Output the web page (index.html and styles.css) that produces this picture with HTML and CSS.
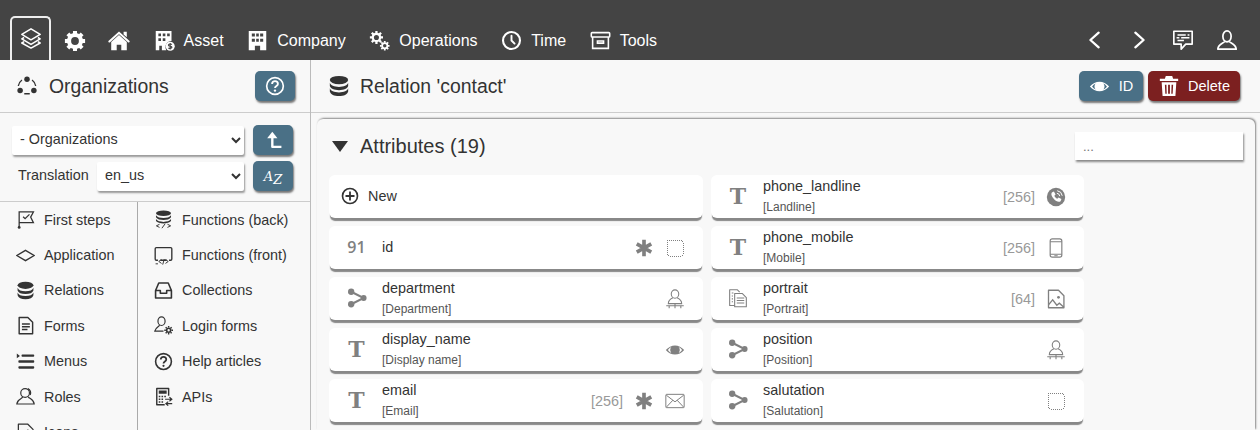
FILE: index.html
```html
<!DOCTYPE html>
<html lang="en">
<head>
    <meta charset="UTF-8">
    <meta name="viewport" content="width=device-width, initial-scale=1.0">
    <title>Relation contact</title>
    <link rel="stylesheet" href="styles.css">
</head>
<body>
    <svg class="sprite" xmlns="http://www.w3.org/2000/svg">
        <symbol id="i-layers" viewBox="0 0 24 24"><g fill="none" stroke="currentColor" stroke-width="1.7" stroke-linejoin="round"><path d="M12 2 22 8l-10 6L2 8z"/><path d="M4.5 11.5 2 13l10 6 10-6-2.5-1.5"/><path d="M4.5 16 2 17.5 12 23l10-5.5-2.5-1.5"/></g></symbol>
        <symbol id="i-gear" viewBox="0 0 24 24"><circle cx="12" cy="12" r="6.5" fill="none" stroke="currentColor" stroke-width="4.5"/><g stroke="currentColor" stroke-width="4.4"><path d="M12 1v5M12 18v5M1 12h5M18 12h5M4.2 4.2l3.5 3.5M16.3 16.3l3.5 3.5M19.8 4.2l-3.5 3.5M7.7 16.3l-3.5 3.5"/></g></symbol>
        <symbol id="i-home" viewBox="0 0 24 24"><path fill="currentColor" d="M12 5.5 3.5 13v9h6v-6h5v6h6v-9z"/><path fill="none" stroke="currentColor" stroke-width="2.2" stroke-linecap="round" d="M1.5 12.5 12 3l10.5 9.5"/><path fill="currentColor" d="M17 2h3.5v6L17 5z"/></symbol>
        <symbol id="i-asset" viewBox="0 0 24 24"><path fill="currentColor" fill-rule="evenodd" d="M2 1h18v11.5a7 7 0 0 0-6 10.5H9v-5H6v5H2zM5 4v3h3V4zm5 0v3h3V4zm5 0v3h3V4zM5 9.5v3h3v-3zm5 0v3h3v-3z"/><circle cx="18.5" cy="18.5" r="5.2" fill="currentColor"/><path fill="none" stroke="#444" stroke-width="1.3" d="M20.5 16.5c-1-.8-4-.8-4 .9s4 .9 4 2.4-3 1.5-4 .7M18.5 14.8v7.4"/></symbol>
        <symbol id="i-company" viewBox="0 0 24 24"><path fill="currentColor" fill-rule="evenodd" d="M2 1h20v22h-7v-5H9v5H2zM5.5 4v3.5H9V4zm5 0v3.5h3V4zM15 4v3.5h3.5V4zM5.5 10v3.5H9V10zm5 0v3.5h3V10zM15 10v3.5h3.5V10z"/></symbol>
        <symbol id="i-gears" viewBox="0 0 24 24"><circle cx="8.5" cy="8.5" r="4.2" fill="none" stroke="currentColor" stroke-width="2.6"/><path stroke="currentColor" stroke-width="2.6" d="M8.5 1v3M8.5 13v3M1 8.5h3M13 8.5h3M3.2 3.2l2.1 2.1M11.7 11.7l2.1 2.1M13.8 3.2l-2.1 2.1M5.3 11.7l-2.1 2.1"/><circle cx="18" cy="18" r="3" fill="none" stroke="currentColor" stroke-width="2"/><path stroke="currentColor" stroke-width="2" d="M18 12.5v2M18 21.5v2M12.5 18h2M21.5 18h2M14.1 14.1l1.4 1.4M20.5 20.5l1.4 1.4M21.9 14.1l-1.4 1.4M15.5 20.5l-1.4 1.4"/></symbol>
        <symbol id="i-clock" viewBox="0 0 24 24"><circle cx="12" cy="12" r="9.7" fill="none" stroke="currentColor" stroke-width="2.4"/><path fill="none" stroke="currentColor" stroke-width="2.2" stroke-linecap="round" d="M12 6.5V12l3.5 3.5"/></symbol>
        <symbol id="i-box" viewBox="0 0 24 24"><g fill="none" stroke="currentColor" stroke-width="1.8"><rect x="1.5" y="3" width="21" height="5" rx="1"/><path d="M3 8v13h18V8M8.5 12.5h7V15h-7z"/></g></symbol>
        <symbol id="i-prev" viewBox="0 0 24 24"><path fill="none" stroke="currentColor" stroke-width="2.5" stroke-linecap="round" stroke-linejoin="round" d="M16 4 7 12l9 8"/></symbol>
        <symbol id="i-next" viewBox="0 0 24 24"><path fill="none" stroke="currentColor" stroke-width="2.5" stroke-linecap="round" stroke-linejoin="round" d="m8 4 9 8-9 8"/></symbol>
        <symbol id="i-chat" viewBox="0 0 24 24"><path fill="none" stroke="currentColor" stroke-width="1.8" stroke-linejoin="round" d="M2 2.5h20v14h-7L10 22v-5.5H2z"/><path stroke="currentColor" stroke-width="1.7" d="M6 6.5h9M17 6.5h2M5 9.5h3M10 9.5h9M6 12.5h7"/></symbol>
        <symbol id="i-user" viewBox="0 0 24 24"><g fill="none" stroke="currentColor" stroke-width="1.9" stroke-linejoin="round"><ellipse cx="12" cy="8" rx="4.5" ry="6"/><path d="M9.5 13.5c-.5 2-7 2.5-7.500 8.500h20c-.5-6-7-6.500-7.500-8.500"/></g></symbol>
        <symbol id="i-org" viewBox="0 0 24 24"><g fill="currentColor"><circle cx="12" cy="4.5" r="3"/><circle cx="4.5" cy="17" r="3"/><circle cx="19.5" cy="17" r="3"/></g><path fill="none" stroke="currentColor" stroke-width="1.5" d="M6.5 5.500A10 10 0 0 0 2.500 12M17.500 5.500a10 10 0 0 1 4 6.500M9 20.500h6"/></symbol>
        <symbol id="i-help" viewBox="0 0 24 24"><circle cx="12" cy="12" r="10" fill="none" stroke="currentColor" stroke-width="2"/><path fill="none" stroke="currentColor" stroke-width="2.2" d="M8.5 9.5c0-4.500 7-4.500 7 0 0 2.500-3.500 2.500-3.500 5"/><circle cx="12" cy="17.5" r="1.4" fill="currentColor"/></symbol>
        <symbol id="i-db" viewBox="0 0 24 24"><g fill="currentColor"><ellipse cx="12" cy="5.5" rx="10" ry="4.5"/><path d="M2 8.5c1 3 4.500 4.500 10 4.500s9-1.500 10-4.500V12c-1 3-4.500 4.500-10 4.500S3 15 2 12z"/><path d="M2 14.500c1 3 4.500 4.500 10 4.500s9-1.500 10-4.500V18c-1 3.500-4.500 5-10 5S3 21.500 2 18z"/></g></symbol>
        <symbol id="i-plus" viewBox="0 0 24 24"><circle cx="12" cy="12" r="10" fill="none" stroke="currentColor" stroke-width="2.2"/><path stroke="currentColor" stroke-width="2.4" d="M12 6v12M6 12h12"/></symbol>
        <symbol id="i-eye" viewBox="0 0 24 24"><path fill="currentColor" fill-rule="evenodd" d="M1 12c3-3.500 7-5.500 11-5.500S20 8.500 23 12c-3 3.500-7 5.500-11 5.500S4 15.500 1 12zm6.500-3.500C6 9.300 4.500 10.500 3.500 12c1 1.500 2.500 2.700 4 3.500a6 6 0 0 1 0-7zm9 0a6 6 0 0 1 0 7c1.500-.8 3-2 4-3.500-1-1.500-2.500-2.700-4-3.500z"/></symbol>
        <symbol id="i-trash" viewBox="0 0 24 24"><path fill="currentColor" fill-rule="evenodd" d="M8.500 1h7l1 3H22v2.500H2V4h5.500zM4 8h16l-1 15H5zm3.500 2.500.5 10h1.500l-.3-10zm3.500 0v10h2v-10zm3.800 0-.3 10H16l.5-10z"/></symbol>
        <symbol id="i-up" viewBox="0 0 24 24"><path fill="none" stroke="currentColor" stroke-width="3" stroke-linejoin="round" d="M22 20H10.500V5"/><path fill="currentColor" d="M10.500 1 17 9H4z"/></symbol>
        <symbol id="i-flag" viewBox="0 0 24 24"><g fill="none" stroke="currentColor" stroke-width="1.6"><path d="M4 22V2.500h18L18.500 9l3.500 7H4"/><path d="m9 8.500 2.500 2.500L17 5.500"/></g><circle cx="4" cy="22" r="1.8" fill="currentColor"/></symbol>
        <symbol id="i-diamond" viewBox="0 0 24 24"><path fill="none" stroke="currentColor" stroke-width="1.7" d="M12 5.500 23 12l-11 6.500L1 12z"/></symbol>
        <symbol id="i-form" viewBox="0 0 24 24"><g fill="none" stroke="currentColor" stroke-width="1.8" stroke-linejoin="round"><path d="M4 2h11l6 6v14.500H4z"/><path d="M7.500 10h10M7.500 13.500h10M7.500 17h7"/></g></symbol>
        <symbol id="i-menu" viewBox="0 0 24 24"><g fill="currentColor"><path d="M1 2v6l4-3z"/><rect x="7" y="3" width="16" height="3" rx="1"/><rect x="3" y="10.5" width="20" height="3" rx="1"/><rect x="3" y="18" width="20" height="3" rx="1"/></g></symbol>
        <symbol id="i-roles" viewBox="0 0 24 24"><g fill="none" stroke="currentColor" stroke-width="1.5"><circle cx="11.5" cy="7.5" r="5.5"/><path d="M15 2a6 6 0 0 1 3 8"/><path d="M8.500 12.500c-.5 2.500-7 2.500-7.500 9h22c-.5-6-6-6.500-7.500-9"/></g></symbol>
        <symbol id="i-dbcode" viewBox="0 0 24 24"><g fill="currentColor"><ellipse cx="12" cy="4" rx="9.5" ry="3.5"/><path d="M2.500 6.500C4 9 8 10 12 10s8-1 9.500-3.500V9c-1.500 2.500-5.500 3.500-9.500 3.500S4 11.500 2.500 9z"/><path d="M2.500 11.500C4 14 8 15 12 15s8-1 9.500-3.500V14c-1.500 2-5.500 3-9.500 3s-8-1-9.500-3z"/></g><path fill="none" stroke="currentColor" stroke-width="1.2" d="M7 18l-4 2 4 2M17 18l4 2-4 2M14 17.500 10 23"/></symbol>
        <symbol id="i-screen" viewBox="0 0 24 24"><path fill="none" stroke="currentColor" stroke-width="1.7" stroke-linejoin="round" d="M5 18H3a1.500 1.500 0 0 1-1.500-1.500v-13A1.500 1.500 0 0 1 3 2h18a1.500 1.500 0 0 1 1.500 1.500v13A1.500 1.500 0 0 1 21 18h-2M8 18h8"/><path fill="none" stroke="currentColor" stroke-width="1.2" d="M9.500 17l-3.500 2.500 3.500 2.500M14.500 17l3.500 2.500-3.500 2.500M13 16.500l-2 7M2 22.500h3"/></symbol>
        <symbol id="i-inbox" viewBox="0 0 24 24"><g fill="none" stroke="currentColor" stroke-width="2" stroke-linejoin="round"><path d="M6 2.500h12L22 12v9.500H2V12z"/><path d="M2 12h6v3.500h8V12h6"/></g></symbol>
        <symbol id="i-login" viewBox="0 0 24 24"><g fill="none" stroke="currentColor" stroke-width="1.5"><ellipse cx="9.5" cy="6.5" rx="4.5" ry="5.5"/><path d="M7 11.500c-.5 2-5 2.500-6 7.500h11"/></g><circle cx="18.5" cy="18" r="2.5" fill="none" stroke="currentColor" stroke-width="2"/><path stroke="currentColor" stroke-width="1.8" d="M18.500 12.500v2M18.500 21.500v2M13 18h2M22 18h2M14.700 14.200l1.400 1.400M20.900 20.400l1.400 1.400M22.300 14.200l-1.400 1.400M16.100 20.400l-1.400 1.400"/></symbol>
        <symbol id="i-api" viewBox="0 0 24 24"><path fill="none" stroke="currentColor" stroke-width="1.8" stroke-linejoin="round" d="M18.500 11V2h-15v20.500h10"/><path fill="currentColor" d="M6 4.500h10v4H6zM6 11h2v2H6zm3.500 0h2v2h-2zM13 11h2v2h-2zM6 14.500h2v2H6zm3.500 0h2v2h-2zM6 18h2v2H6zm3.500 0h2v2h-2z"/><path fill="none" stroke="currentColor" stroke-width="1.5" d="M14 15.500h8.500m-3-2.500 3 2.500-3 2.500M23 21h-8m3-2.500L15 21l3 2.500"/></symbol>
        <symbol id="i-share" viewBox="0 0 24 24"><g fill="currentColor"><circle cx="5" cy="4.5" r="3.8"/><circle cx="5" cy="19.5" r="3.8"/><circle cx="20" cy="12" r="3.5"/></g><path fill="none" stroke="currentColor" stroke-width="2.4" d="m5 4.500 15 7.500-15 7.500"/></symbol>
        <symbol id="i-dashed" viewBox="0 0 24 24"><rect x="2.4" y="2.4" width="19.2" height="19.2" rx="2" fill="none" stroke="currentColor" stroke-width="1.2" stroke-dasharray="1.2 1.2" shape-rendering="crispEdges"/></symbol>
        <symbol id="i-star" viewBox="0 0 24 24"><path stroke="currentColor" stroke-width="4.4" d="M12 2v20M3.300 7l17.400 10M20.700 7 3.300 17"/></symbol>
        <symbol id="i-person" viewBox="0 0 24 24"><g fill="none" stroke="currentColor" stroke-width="1.3"><ellipse cx="12" cy="6" rx="4.5" ry="5"/><path d="M9.500 10.500C6 12 4 13.500 4 17.500h16c0-4-2-5.500-5.500-7M1.500 20h21M12 17.500V23M5 20v3M19 20v3"/></g></symbol>
        <symbol id="i-phone" viewBox="0 0 24 24"><circle cx="12" cy="12" r="11" fill="currentColor"/><path fill="#fff" d="M7 6.500 9.500 5.500 11.500 9 10 10.500c.6 1.500 2 3 3.500 3.500L15 12.500l3.500 2-1 2.500c-2 1.500-5.500.5-8-2.500S5.500 8.500 7 6.500z"/><path fill="none" stroke="#fff" stroke-width="1.2" d="M13 7.500a4 4 0 0 1 3.500 3.500M13.500 4.500a7 7 0 0 1 6 6"/></symbol>
        <symbol id="i-mobile" viewBox="0 0 24 24"><g fill="none" stroke="currentColor" stroke-width="1.4"><rect x="5" y="1" width="14" height="22" rx="2.5"/><path d="M5 4.500h14M5 19.500h14M10 21.300h4"/></g></symbol>
        <symbol id="i-files" viewBox="0 0 24 24"><g fill="none" stroke="currentColor" stroke-width="1.3" stroke-linejoin="round"><path d="M8 21H2V2h9l3 3"/><path d="M8 6.500h9l5 5v11H8z"/><path d="M10.500 12h9M10.500 15h9M10.500 18h9M4.500 6h2M4.500 9.500h1.500M4.500 13h1.500M4.500 16.500h1.500"/></g></symbol>
        <symbol id="i-image" viewBox="0 0 24 24"><path fill="none" stroke="currentColor" stroke-width="1.6" stroke-linejoin="round" d="M3 1.500h12l6.500 6.500v14.500H3z"/><circle cx="15" cy="10" r="1.7" fill="currentColor"/><path fill="none" stroke="currentColor" stroke-width="1.6" d="M3 19l5-6 5 6.500 3-2.500 5.500 5"/></symbol>
        <symbol id="i-mail" viewBox="0 0 24 24"><g fill="none" stroke="currentColor" stroke-width="1.2"><rect x="1" y="4" width="22" height="16" rx="1"/><path d="m1.500 5 10.500 8 10.500-8M1.500 19.500l8-8.500M22.500 19.500l-8-8.500"/></g></symbol>
    </svg>

    <header class="topbar">
        <a class="tab-active"><svg class="ico ico-nav"><use href="#i-layers"/></svg></a>
        <a class="nav-icon gear"><svg class="ico ico-nav"><use href="#i-gear"/></svg></a>
        <a class="nav-icon home"><svg class="ico ico-nav"><use href="#i-home"/></svg></a>
        <a class="nav-item"><svg class="ico ico-nav"><use href="#i-asset"/></svg>Asset</a>
        <a class="nav-item"><svg class="ico ico-nav"><use href="#i-company"/></svg>Company</a>
        <a class="nav-item"><svg class="ico ico-nav"><use href="#i-gears"/></svg>Operations</a>
        <a class="nav-item"><svg class="ico ico-nav"><use href="#i-clock"/></svg>Time</a>
        <a class="nav-item"><svg class="ico ico-nav"><use href="#i-box"/></svg>Tools</a>
        <div class="nav-right">
            <svg class="ico ico-nav"><use href="#i-prev"/></svg>
            <svg class="ico ico-nav"><use href="#i-next"/></svg>
            <svg class="ico ico-nav"><use href="#i-chat"/></svg>
            <svg class="ico ico-nav"><use href="#i-user"/></svg>
        </div>
    </header>

    <div class="layout">
        <aside class="sidebar">
            <div class="side-head">
                <svg class="ico ico-title"><use href="#i-org"/></svg>
                <h1 class="title">Organizations</h1>
                <button class="btn btn-help"><svg class="ico ico-btn"><use href="#i-help"/></svg></button>
            </div>
            <div class="side-form">
                <div class="form-row">
                    <select class="sel sel-wide"><option>- Organizations</option></select>
                    <button class="btn btn-square"><svg class="ico ico-arrow"><use href="#i-up"/></svg></button>
                </div>
                <div class="form-row">
                    <label class="lang-label">Translation</label>
                    <select class="sel sel-lang"><option>en_us</option></select>
                    <button class="btn btn-square"><span class="az">A<sub>Z</sub></span></button>
                </div>
            </div>
            <nav class="side-nav">
                <ul class="nav-col nav-col-left">
                    <li><svg class="ico ico-side"><use href="#i-flag"/></svg>First steps</li>
                    <li><svg class="ico ico-side"><use href="#i-diamond"/></svg>Application</li>
                    <li><svg class="ico ico-side"><use href="#i-db"/></svg>Relations</li>
                    <li><svg class="ico ico-side"><use href="#i-form"/></svg>Forms</li>
                    <li><svg class="ico ico-side"><use href="#i-menu"/></svg>Menus</li>
                    <li><svg class="ico ico-side"><use href="#i-roles"/></svg>Roles</li>
                    <li><svg class="ico ico-side"><use href="#i-image"/></svg>Icons</li>
                </ul>
                <ul class="nav-col">
                    <li><svg class="ico ico-side"><use href="#i-dbcode"/></svg>Functions (back)</li>
                    <li><svg class="ico ico-side"><use href="#i-screen"/></svg>Functions (front)</li>
                    <li><svg class="ico ico-side"><use href="#i-inbox"/></svg>Collections</li>
                    <li><svg class="ico ico-side"><use href="#i-login"/></svg>Login forms</li>
                    <li><svg class="ico ico-side"><use href="#i-help"/></svg>Help articles</li>
                    <li><svg class="ico ico-side"><use href="#i-api"/></svg>APIs</li>
                </ul>
            </nav>
        </aside>

        <main class="main">
            <div class="main-head">
                <svg class="ico ico-title"><use href="#i-db"/></svg>
                <h1 class="title title-main">Relation 'contact'</h1>
                <button class="btn btn-text btn-id"><svg class="ico ico-eye"><use href="#i-eye"/></svg>ID</button>
                <button class="btn btn-text btn-delete"><svg class="ico ico-trash"><use href="#i-trash"/></svg>Delete</button>
            </div>
            <section class="panel">
                <div class="panel-left">
                    <h2 class="panel-title"><span class="caret"></span>Attributes (19)</h2>
                    <div class="cards">
                        <div class="card card-new">
                            <svg class="ico ico-plus"><use href="#i-plus"/></svg>
                            <span class="name">New</span>
                        </div>
                        <div class="card">
                            <span class="kind"><span class="kind-t">T</span></span>
                            <div class="card-text"><span class="name">phone_landline</span><span class="caption">[Landline]</span></div>
                            <span class="len">[256]</span>
                            <svg class="ico ico-attr"><use href="#i-phone"/></svg>
                        </div>
                        <div class="card">
                            <span class="kind"><span class="kind-n">91</span></span>
                            <div class="card-text"><span class="name">id</span></div>
                            <svg class="ico ico-attr"><use href="#i-star"/></svg>
                            <svg class="ico ico-attr"><use href="#i-dashed"/></svg>
                        </div>
                        <div class="card">
                            <span class="kind"><span class="kind-t">T</span></span>
                            <div class="card-text"><span class="name">phone_mobile</span><span class="caption">[Mobile]</span></div>
                            <span class="len">[256]</span>
                            <svg class="ico ico-attr"><use href="#i-mobile"/></svg>
                        </div>
                        <div class="card">
                            <span class="kind"><svg class="ico ico-kind"><use href="#i-share"/></svg></span>
                            <div class="card-text"><span class="name">department</span><span class="caption">[Department]</span></div>
                            <svg class="ico ico-attr"><use href="#i-person"/></svg>
                        </div>
                        <div class="card">
                            <span class="kind"><svg class="ico ico-kind"><use href="#i-files"/></svg></span>
                            <div class="card-text"><span class="name">portrait</span><span class="caption">[Portrait]</span></div>
                            <span class="len">[64]</span>
                            <svg class="ico ico-attr"><use href="#i-image"/></svg>
                        </div>
                        <div class="card">
                            <span class="kind"><span class="kind-t">T</span></span>
                            <div class="card-text"><span class="name">display_name</span><span class="caption">[Display name]</span></div>
                            <svg class="ico ico-attr"><use href="#i-eye"/></svg>
                        </div>
                        <div class="card">
                            <span class="kind"><svg class="ico ico-kind"><use href="#i-share"/></svg></span>
                            <div class="card-text"><span class="name">position</span><span class="caption">[Position]</span></div>
                            <svg class="ico ico-attr"><use href="#i-person"/></svg>
                        </div>
                        <div class="card">
                            <span class="kind"><span class="kind-t">T</span></span>
                            <div class="card-text"><span class="name">email</span><span class="caption">[Email]</span></div>
                            <span class="len">[256]</span>
                            <svg class="ico ico-attr"><use href="#i-star"/></svg>
                            <svg class="ico ico-attr"><use href="#i-mail"/></svg>
                        </div>
                        <div class="card">
                            <span class="kind"><svg class="ico ico-kind"><use href="#i-share"/></svg></span>
                            <div class="card-text"><span class="name">salutation</span><span class="caption">[Salutation]</span></div>
                            <svg class="ico ico-attr"><use href="#i-dashed"/></svg>
                        </div>
                    </div>
                </div>
                <input class="filter" type="text" placeholder="...">
            </section>
        </main>
    </div>
</body>
</html>
```

FILE: styles.css
```css
* {
    box-sizing: border-box;
}

html, body {
    height: 430px;
    overflow: hidden;
}

body {
    margin: 0;
    font-family: "Liberation Sans", Arial, sans-serif;
    font-size: 15px;
    color: #333;
    background-color: #f8f8f8;
}

.sprite {
    display: none;
}

.ico {
    display: block;
    flex: none;
}

/* top bar */
.topbar {
    height: 60px;
    display: flex;
    align-items: flex-end;
    padding-left: 10px;
    background-color: #444;
    color: #fff;
    font-size: 16px;
}

.tab-active {
    width: 41px;
    height: 44px;
    display: flex;
    justify-content: center;
    padding-top: 9px;
    border: 2px solid #eee;
    border-bottom: none;
    border-radius: 5px 5px 0 0;
}

.ico-nav {
    width: 22px;
    height: 22px;
}

.nav-icon, .nav-item {
    height: 40px;
    display: flex;
    align-items: center;
    padding-top: 1px;
}

.nav-icon.gear {
    margin-left: 13px;
}

.nav-icon.home {
    margin-left: 22px;
}

.nav-item {
    gap: 9px;
    margin-left: 23.6px;
}

.nav-item .ico-nav {
    width: 21px;
    height: 21px;
}

.nav-right {
    height: 40px;
    display: flex;
    align-items: center;
    gap: 22px;
    margin-left: auto;
    padding-right: 22px;
}

/* sidebar */
.layout {
    height: 370px;
    display: flex;
}

.sidebar {
    width: 311px;
    flex: none;
    border-right: 1px solid #bbb;
    display: flex;
    flex-direction: column;
}

.side-head, .main-head {
    height: 53px;
    display: flex;
    align-items: center;
    border-bottom: 1px solid #ccc;
}

.side-head {
    padding: 0 15px 0 16px;
}

.title {
    margin: 0 0 0 11px;
    font-size: 19.4px;
    font-weight: normal;
    flex: 1;
}

.title-main {
    margin-left: 10px;
}

.ico-title {
    width: 22px;
    height: 22px;
}

.btn {
    display: flex;
    align-items: center;
    justify-content: center;
    border: none;
    border-radius: 5px;
    color: #fff;
    background-color: #4a7086;
    box-shadow: 1px 2px 2px #777;
    font-family: inherit;
    font-size: 14.5px;
    padding: 0;
}

.btn-help {
    width: 40px;
    height: 30px;
}

.ico-btn {
    width: 20px;
    height: 20px;
}

.ico-arrow {
    width: 19px;
    height: 19px;
}

.side-form {
    height: 89px;
    padding: 12px 17px 0 12px;
    display: flex;
    flex-direction: column;
    gap: 6px;
    border-bottom: 1px solid #ccc;
}

.form-row {
    display: flex;
    align-items: center;
}

.sel {
    height: 29px;
    padding: 0 0 2px 4px;
    border: none;
    border-radius: 2px;
    background-color: #fff;
    box-shadow: 1px 2px 2px #999;
    color: #333;
    font-family: inherit;
    font-size: 14.4px;
}

.sel-wide {
    width: 232px;
}

.lang-label {
    width: 85px;
    padding: 0 0 2px 6px;
    font-size: 14.4px;
}

.sel-lang {
    width: 147px;
}

.btn-square {
    width: 40px;
    height: 30px;
    margin-left: 9px;
}

.az {
    font-family: "DejaVu Serif", serif;
    font-style: italic;
    font-size: 13px;
}

.az sub {
    font-size: 13px;
    vertical-align: -3px;
    line-height: 0;
}

.side-nav {
    flex: 1;
    display: flex;
    overflow: hidden;
}

.nav-col {
    list-style: none;
    margin: 0;
    padding: 0 0 0 16px;
    flex: 1;
}

.nav-col-left {
    width: 138px;
    flex: none;
    border-right: 1px solid #aaa;
}

.nav-col li {
    height: 35.4px;
    display: flex;
    align-items: center;
    gap: 9px;
    font-size: 14.4px;
}

.ico-side {
    width: 19px;
    height: 19px;
}

/* main area */
.main {
    flex: 1;
    min-width: 0;
    display: flex;
    flex-direction: column;
}

.main-head {
    padding: 0 20px 0 17px;
    flex: none;
}

.btn-text {
    height: 30px;
    gap: 9px;
}

.btn-id {
    width: 64px;
    margin-right: 5px;
}

.ico-eye {
    width: 21px;
    height: 21px;
}

.ico-trash {
    width: 22px;
    height: 22px;
}

.btn-delete {
    width: 92px;
    gap: 8px;
    background-color: #7c2020;
}

.panel {
    margin: 6px 5px 0 6px;
    flex: 1;
    display: flex;
    align-items: flex-start;
    padding: 0 11px 0 12px;
    border-radius: 6px 6px 0 0;
    background-color: #f8f8f8;
    box-shadow: 1px -1px 2px #888;
}

.panel-left {
    width: 755px;
    flex: none;
}

.panel-title {
    height: 56px;
    margin: 0;
    display: flex;
    align-items: center;
    gap: 12px;
    padding: 0 0 2px 3px;
    font-size: 20px;
    font-weight: normal;
}

.caret {
    width: 0;
    height: 0;
    border-left: 8px solid transparent;
    border-right: 8px solid transparent;
    border-top: 11px solid #333;
}

.cards {
    display: grid;
    grid-template-columns: 374px 373px;
    grid-auto-rows: 43px;
    gap: 8px;
}

.card {
    display: flex;
    align-items: center;
    padding-right: 18px;
    gap: 11px;
    border-radius: 6px;
    background-color: #fff;
    box-shadow: 0 4px 1px -1px #888;
}

.card-new {
    padding: 0 0 2px 12px;
    gap: 9px;
}

.ico-plus {
    width: 18px;
    height: 18px;
}

.kind {
    width: 53px;
    display: flex;
    justify-content: center;
    padding: 0 0 2px 2px;
    margin-right: -11px;
    flex: none;
    color: #808080;
}

.card:nth-child(even) .kind {
    width: 52px;
}

.kind-t {
    font-family: "DejaVu Serif", serif;
    font-weight: bold;
    font-size: 22px;
    line-height: 1;
}

.kind-n {
    font-family: "Open Sans", sans-serif;
    font-weight: 600;
    font-size: 16px;
    line-height: 1;
}

.ico-kind {
    width: 20px;
    height: 20px;
}

.card-text {
    flex: 1;
    display: flex;
    flex-direction: column;
    gap: 4px;
    padding-bottom: 1px;
}

.name {
    font-size: 14.4px;
    line-height: 18px;
}

.caption {
    font-size: 12px;
    line-height: 16px;
    color: #555;
}

.len {
    font-size: 14.4px;
    color: #999;
}

.ico-attr {
    width: 20px;
    height: 20px;
    color: #808080;
}

.filter {
    width: 168px;
    height: 28px;
    margin: 13px 0 0 -9px;
    padding: 0 8px;
    border: none;
    background-color: #fff;
    box-shadow: 1px 2px 2px #888;
    font-family: inherit;
    font-size: 13px;
}
```
